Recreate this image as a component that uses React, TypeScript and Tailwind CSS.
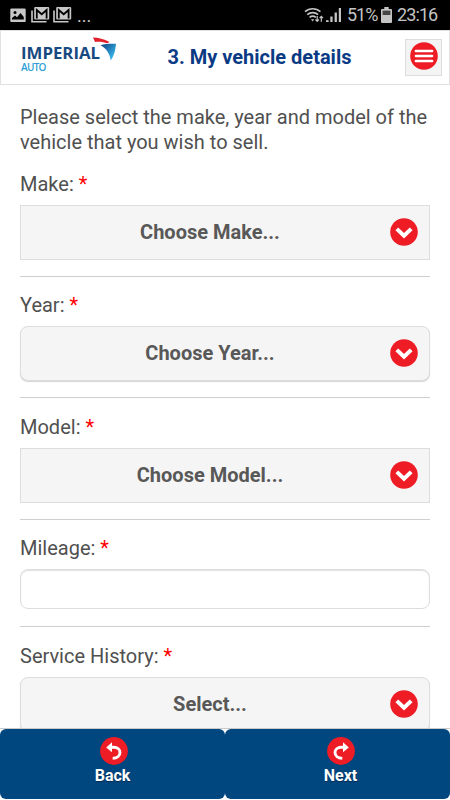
import { useState } from 'react';

const ChevronBadge = () => (
  <svg className="h-7 w-7 shrink-0" viewBox="0 0 28 28" fill="none">
    <circle cx="14" cy="14" r="13.8" fill="#ee1c25" />
    <path d="M6.8 10.9 14 17.8l7.2-6.9" stroke="#fff" strokeWidth="4" />
  </svg>
);

const MailIcon = () => (
  <svg className="h-[18px] w-[19px]" viewBox="0 0 19 18" fill="none">
    <path d="M1 4.5v11.2h14.5" stroke="#c8c8c8" strokeWidth="1.6" />
    <rect x="3.2" y="1" width="15" height="12.6" rx="1" fill="#c8c8c8" />
    <path d="M5.8 12.4V4l4.9 4.2L15.6 4v8.4" stroke="#000" strokeWidth="1.8" />
  </svg>
);

const StatusBar = () => (
  <div className="flex h-[30px] shrink-0 items-center bg-black text-[#c4c4c4]">
    <svg className="ml-2.5 h-[15px] w-4" viewBox="0 0 16 15">
      <rect x="0.3" y="0.5" width="15.4" height="13.6" rx="1.2" fill="#c8c8c8" />
      <circle cx="5" cy="4.6" r="1.5" fill="#000" />
      <path d="M2 11.5V10l3-2.5 2 1.8L10.5 5l3.3 4v2.5z" fill="#000" />
    </svg>
    <div className="ml-[5px] flex gap-[3px]">
      <MailIcon />
      <MailIcon />
    </div>
    <span className="ml-[5px] pt-0.5 text-[18px] leading-none">...</span>
    <div className="ml-auto flex items-center pr-3">
      <svg className="h-4 w-5" viewBox="0 0 20 16" fill="none" stroke="#c4c4c4">
        <path d="M1 4.7a11.5 11.5 0 0 1 15.4 0M3.3 7.6a8.2 8.2 0 0 1 10.8 0M5.6 10.4a5 5 0 0 1 6.2 0" strokeWidth="1.7" />
        <path d="M7 12.2h3.2l-1.6 2.2z" fill="#c4c4c4" stroke="none" />
        <path d="M13.2 9v5.3m-1.7-1.8 1.7 1.9 1.7-1.9M17.3 14.8V9.4m-1.7 1.8 1.7-1.9 1.7 1.9" strokeWidth="1.2" />
      </svg>
      <svg className="ml-[2px] h-4 w-4" viewBox="0 0 16 16" fill="#c4c4c4">
        <path d="M0 13.2h2.6V15H0zM4.3 9.5h2.3V15H4.3zM8.6 5.5h2.3V15H8.6zM12.8 1H15v14h-2.2z" />
      </svg>
      <span className="ml-[5px] w-[30px] text-[18px] leading-none tracking-[-1px] whitespace-nowrap">51%</span>
      <svg className="ml-1 h-4 w-[11px]" viewBox="0 0 11 16">
        <path d="M3.3 0h4.4v2H10a1 1 0 0 1 1 1v12a1 1 0 0 1-1 1H1a1 1 0 0 1-1-1V3a1 1 0 0 1 1-1h2.3z" fill="#c4c4c4" />
        <path d="M1.6 3.6h7.8V8H1.6z" fill="#444" />
      </svg>
      <span className="ml-[5px] w-[41px] text-[18px] leading-none tracking-[-0.9px] whitespace-nowrap">23:16</span>
    </div>
  </div>
);

const Logo = () => (
  <div className="relative h-9 w-[93px]">
    <div className="pt-[3px] font-['Open_Sans',sans-serif] text-[16.8px] leading-[19px] font-bold text-[#174a80]">
      IMPERIAL
    </div>
    <div className="font-['Open_Sans',sans-serif] text-[10px] leading-[10px] font-semibold tracking-[-0.7px] text-[#2e9fd6]">
      AUTO
    </div>
    <svg className="absolute -top-[3px] left-[72px] h-6 w-6" viewBox="0 0 24 24">
      <defs>
        <linearGradient id="wing" x1="0" y1="0" x2="1" y2="1">
          <stop offset="0.1" stopColor="#124b8a" />
          <stop offset="0.8" stopColor="#35b5ea" />
        </linearGradient>
      </defs>
      <path d="M0 .5c5.5.2 11 1.5 16.500 4.600l-2.300 1.100C10.500 4.800 6.500 4.300 2 4.900z" fill="#e3212d" />
      <path d="M7.500 8.300c5-1.700 10-1.700 15.500-1.500l-.4 3.200c-.5 5-2.300 9.500-4.800 13.500C16.700 16.500 13.500 11.500 7.500 8.300z" fill="url(#wing)" />
    </svg>
  </div>
);

const Header = () => (
  <header className="flex h-[55px] shrink-0 items-center border border-[#e1e1e1] bg-white pr-[7px] pl-5">
    <Logo />
    <h1 className="flex-1 pb-[2px] text-center text-[20px] font-bold text-[#0b3a85]">3. My vehicle details</h1>
    <button className="mb-px flex h-[37px] w-[37px] items-center justify-center border border-[#dddddd] bg-[#f4f4f4] pb-0.5">
      <svg className="h-7 w-7" viewBox="0 0 28 28">
        <circle cx="14" cy="14" r="13.8" fill="#ee1c25" />
        <path d="M6 9h16M6 14h16M6 19h16" stroke="#fff" strokeWidth="2.7" strokeLinecap="round" />
      </svg>
    </button>
  </header>
);

const Label = ({ text }: { text: string }) => (
  <label className="block h-[26px] text-[20px] leading-[26px]">
    {text}: <span className="text-[#ff0000]">*</span>
  </label>
);

const SelectField = ({ label, placeholder, rounded }: { label: string; placeholder: string; rounded?: boolean }) => (
  <div className="flex h-[106px] flex-col">
    <Label text={label} />
    <button
      className={`mt-2 flex h-[55px] shrink-0 items-center border border-[#dddddd] bg-[#f5f5f5] pr-[11px] pb-px pl-[9px] ${
        rounded ? 'rounded-lg shadow-[0_1px_1px_#d4d4d4]' : ''
      }`}
    >
      <span className="flex-1 text-center text-[20px] font-bold text-[#585858]">{placeholder}</span>
      <ChevronBadge />
    </button>
    <hr className="mt-auto h-px shrink-0 border-0 bg-[#cfcfcf]" />
  </div>
);

const App = () => {
  const [mileage, setMileage] = useState('');

  return (
    <div className="flex h-[800px] w-[450px] flex-col overflow-hidden bg-white font-[Roboto,sans-serif] text-[#505050]">
      <StatusBar />
      <Header />
      <main className="min-h-0 flex-1 overflow-hidden px-5 pt-5">
        <p className="text-[20px] leading-[25px]">
          Please select the make, year and model of the vehicle that you wish to sell.
        </p>
        <form className="mt-[15.5px] flex flex-col gap-[15.5px]">
          <SelectField label="Make" placeholder="Choose Make..." />
          <SelectField label="Year" placeholder="Choose Year..." rounded />
          <SelectField label="Model" placeholder="Choose Model..." />
          <div className="flex h-[92px] flex-col">
            <Label text="Mileage" />
            <input
              value={mileage}
              onChange={(e) => setMileage(e.target.value)}
              className="mt-2 h-10 rounded-lg border border-[#dddddd] px-3 text-[20px] shadow-[inset_0_1px_1px_#e0e0e0] outline-none"
            />
            <hr className="mt-auto h-px shrink-0 border-0 bg-[#cfcfcf]" />
          </div>
          <SelectField label="Service History" placeholder="Select..." rounded />
        </form>
      </main>
      <nav className="flex h-[72px] shrink-0 border-t border-[#c9c9c9] bg-white pb-px text-[16px] font-bold text-white">
        <button className="flex w-1/2 flex-col items-center rounded-md bg-[#00467f] pt-2">
          <svg className="ml-[2px] h-7 w-7" viewBox="0 0 28 28" fill="none">
            <circle cx="14" cy="14" r="13.9" fill="#ee1c25" />
            <path d="M6.2 10.4 12 5.2v10z" fill="#fff" />
            <path d="M10.5 10.3h3.2c3.9 0 6.3 2.1 6.3 5.2 0 3.3-2.9 5.6-7.3 5.9" stroke="#fff" strokeWidth="2.9" />
          </svg>
          <span className="pt-px leading-5 [text-shadow:0_1px_1px_#002b50]">Back</span>
        </button>
        <button className="flex w-1/2 flex-col items-center rounded-md bg-[#00467f] pt-2 pl-[6px]">
          <svg className="h-7 w-7" viewBox="0 0 28 28" fill="none">
            <circle cx="14" cy="14" r="13.9" fill="#ee1c25" />
            <path d="M21.8 10.4 16 5.2v10z" fill="#fff" />
            <path d="M17.5 10.3h-3.2C10.4 10.3 8 12.4 8 15.5c0 3.3 2.9 5.6 7.3 5.9" stroke="#fff" strokeWidth="2.9" />
          </svg>
          <span className="pt-px leading-5 [text-shadow:0_1px_1px_#002b50]">Next</span>
        </button>
      </nav>
    </div>
  );
};

export default App;
